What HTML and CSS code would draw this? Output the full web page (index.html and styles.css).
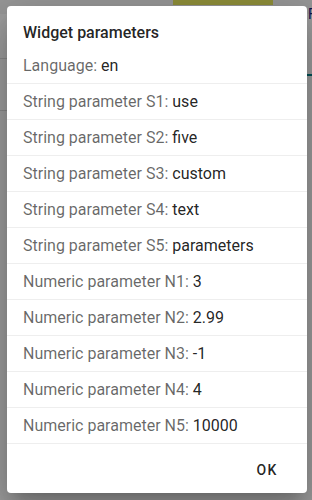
FILE: index.html
```html
<!DOCTYPE html>
<html>
<head>
<meta charset="utf-8">
<link rel="stylesheet" href="styles.css">
</head>
<body>
<div class="page">
  <div class="topbar"><div class="yellow"></div></div>
  <div class="side-text">F</div>
  <div class="side-tab"></div>
  <div class="left-line l1"></div>
  <div class="left-line l2"></div>
</div>
<div class="scrim"></div>
<div class="dialog">
  <div class="title">Widget parameters</div>
  <div class="list">
    <div class="row"><span class="label">Language: </span><span class="value">en</span></div>
    <div class="row"><span class="label">String parameter S1: </span><span class="value">use</span></div>
    <div class="row"><span class="label">String parameter S2: </span><span class="value">five</span></div>
    <div class="row"><span class="label">String parameter S3: </span><span class="value">custom</span></div>
    <div class="row"><span class="label">String parameter S4: </span><span class="value">text</span></div>
    <div class="row"><span class="label">String parameter S5: </span><span class="value">parameters</span></div>
    <div class="row"><span class="label">Numeric parameter N1: </span><span class="value">3</span></div>
    <div class="row"><span class="label">Numeric parameter N2: </span><span class="value">2.99</span></div>
    <div class="row"><span class="label">Numeric parameter N3: </span><span class="value">-1</span></div>
    <div class="row"><span class="label">Numeric parameter N4: </span><span class="value">4</span></div>
    <div class="row"><span class="label">Numeric parameter N5: </span><span class="value">10000</span></div>
  </div>
  <div class="actions"><button class="ok">OK</button></div>
</div>
</body>
</html>
```
FILE: styles.css
```css
html, body {
  margin: 0;
  padding: 0;
  width: 312px;
  height: 500px;
  overflow: hidden;
  font-family: Roboto, "Noto Sans", sans-serif;
}
.page {
  position: relative;
  width: 312px;
  height: 500px;
  background: #ffffff;
}
.topbar {
  height: 14px;
  background: #f4f4f4;
  position: relative;
}
.yellow {
  position: absolute;
  left: 173px;
  top: 0;
  width: 100px;
  height: 5px;
  background: #e6e65c;
}
.side-text {
  position: absolute;
  left: 308px;
  top: 6px;
  font-size: 14px;
  line-height: 16px;
  color: #1a237e;
}
.side-tab {
  position: absolute;
  left: 298px;
  top: 74px;
  width: 14px;
  height: 2px;
  background: #00838f;
}
.left-line {
  position: absolute;
  left: 0;
  width: 10px;
  height: 1px;
  background: #ddd;
}
.l1 { top: 58px; }
.l2 { top: 110px; }
.scrim {
  position: absolute;
  inset: 0;
  background: rgba(0, 0, 0, 0.38);
}
.dialog {
  position: absolute;
  left: 7px;
  top: 6px;
  width: 300px;
  background: #fff;
  border-radius: 4px;
  box-shadow: 0 11px 15px -7px rgba(0,0,0,.2), 0 24px 38px 3px rgba(0,0,0,.14), 0 9px 46px 8px rgba(0,0,0,.12);
  display: flex;
  flex-direction: column;
}
.title {
  height: 42px;
  box-sizing: border-box;
  padding: 10px 16px 0;
  display: flex;
  align-items: center;
  font-size: 16px;
  font-weight: 500;
  color: rgba(0,0,0,0.87);
}
.list {
  display: flex;
  flex-direction: column;
}
.row {
  height: 36px;
  box-sizing: border-box;
  border-bottom: 1px solid #eeeeee;
  padding: 0 16px;
  display: flex;
  align-items: center;
  font-size: 16px;
  white-space: pre;
}
.label { color: rgba(0,0,0,0.6); }
.value { color: rgba(0,0,0,0.87); }
.actions {
  display: flex;
  justify-content: flex-end;
  padding: 8px 8px 5px;
}
.ok {
  min-width: 64px;
  height: 36px;
  border: none;
  background: transparent;
  font-family: Roboto, sans-serif;
  font-size: 14px;
  font-weight: 500;
  letter-spacing: 1.25px;
  color: rgba(0,0,0,0.87);
  padding: 0 8px;
}
```
